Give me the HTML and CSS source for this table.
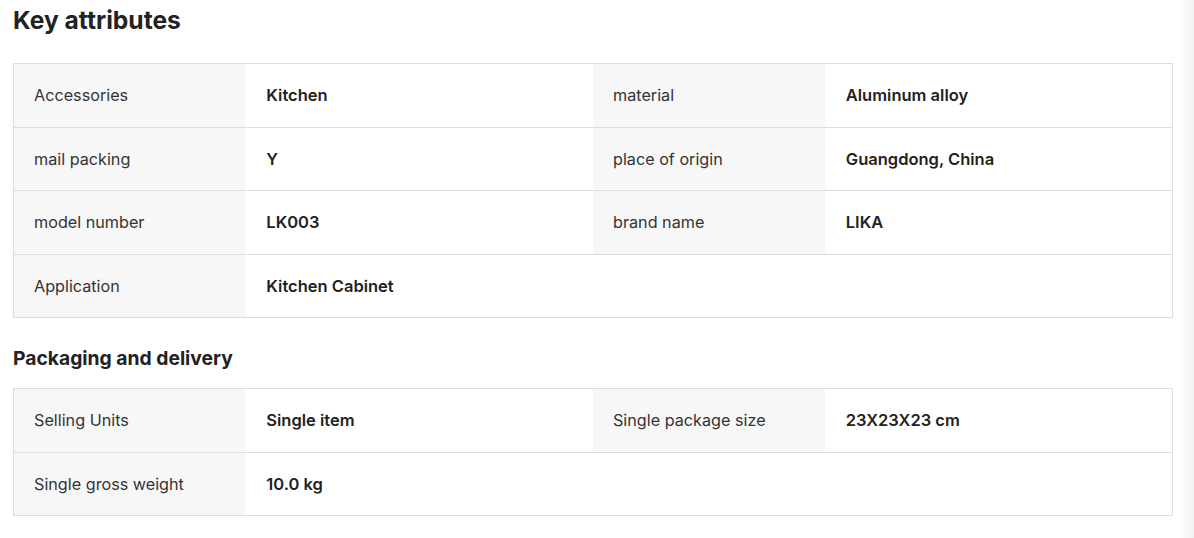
FILE: index.html
```html
<!DOCTYPE html>
<html lang="en">
<head>
    <meta charset="UTF-8">
    <meta name="viewport" content="width=device-width, initial-scale=1.0">
    <title>Key attributes</title>
    <link rel="stylesheet" href="styles.css">
</head>
<body>
    <div class="page">
        <h1 class="title">Key attributes</h1>
        <table class="attrs">
            <colgroup>
                <col class="col-label"><col class="col-value"><col class="col-label"><col class="col-value">
            </colgroup>
            <tr>
                <td class="label">Accessories</td>
                <td class="value">Kitchen</td>
                <td class="label">material</td>
                <td class="value">Aluminum alloy</td>
            </tr>
            <tr>
                <td class="label">mail packing</td>
                <td class="value">Y</td>
                <td class="label">place of origin</td>
                <td class="value">Guangdong, China</td>
            </tr>
            <tr>
                <td class="label">model number</td>
                <td class="value">LK003</td>
                <td class="label">brand name</td>
                <td class="value">LIKA</td>
            </tr>
            <tr>
                <td class="label">Application</td>
                <td class="value">Kitchen Cabinet</td>
                <td class="empty"></td>
                <td class="empty"></td>
            </tr>
        </table>

        <h2 class="subtitle">Packaging and delivery</h2>
        <table class="attrs">
            <colgroup>
                <col class="col-label"><col class="col-value"><col class="col-label"><col class="col-value">
            </colgroup>
            <tr>
                <td class="label">Selling Units</td>
                <td class="value">Single item</td>
                <td class="label">Single package size</td>
                <td class="value">23X23X23 cm</td>
            </tr>
            <tr>
                <td class="label">Single gross weight</td>
                <td class="value">10.0 kg</td>
                <td class="empty"></td>
                <td class="empty"></td>
            </tr>
        </table>
    </div>

    <!-- полоса прокрутки справа -->
    <div class="scroll-track"></div>
</body>
</html>
```

FILE: styles.css
```css
body {
    margin: 0;
    padding: 0;
    font-family: Inter, "Noto Sans", Arial, sans-serif;
    color: #222;
    background: #fff;
    display: flex;
    height: 538px;
    overflow: hidden;
}

.page {
    flex: 1;
    padding: 4px 7px 0 13px;
}

.title {
    font-size: 24.6px;
    line-height: 32px;
    font-weight: 700;
    margin: 0 0 27px;
}

.subtitle {
    font-size: 19.3px;
    line-height: 28px;
    font-weight: 700;
    margin: 26px 0 16px;
}

.attrs {
    width: 100%;
    border-collapse: collapse;
    table-layout: fixed;
    border: 1px solid #ddd;
}

.col-label {
    width: 20%;
}

.col-value {
    width: 30%;
}

.attrs tr {
    border-bottom: 1px solid #ddd;
}

.attrs td {
    font-size: 16.2px;
    line-height: 22.5px;
    padding: 20px;
    vertical-align: middle;
}

.label {
    background: #f7f7f7;
    color: #333;
    font-weight: 400;
}

.value {
    font-weight: 600;
    font-size: 16.5px !important;
    padding-left: 21px !important;
}

/* Полоса прокрутки */
.scroll-track {
    width: 14px;
    flex-shrink: 0;
    background: linear-gradient(to right, #fdfdfd, #f7f7f7 60%, #f1f1f1);
}
```
